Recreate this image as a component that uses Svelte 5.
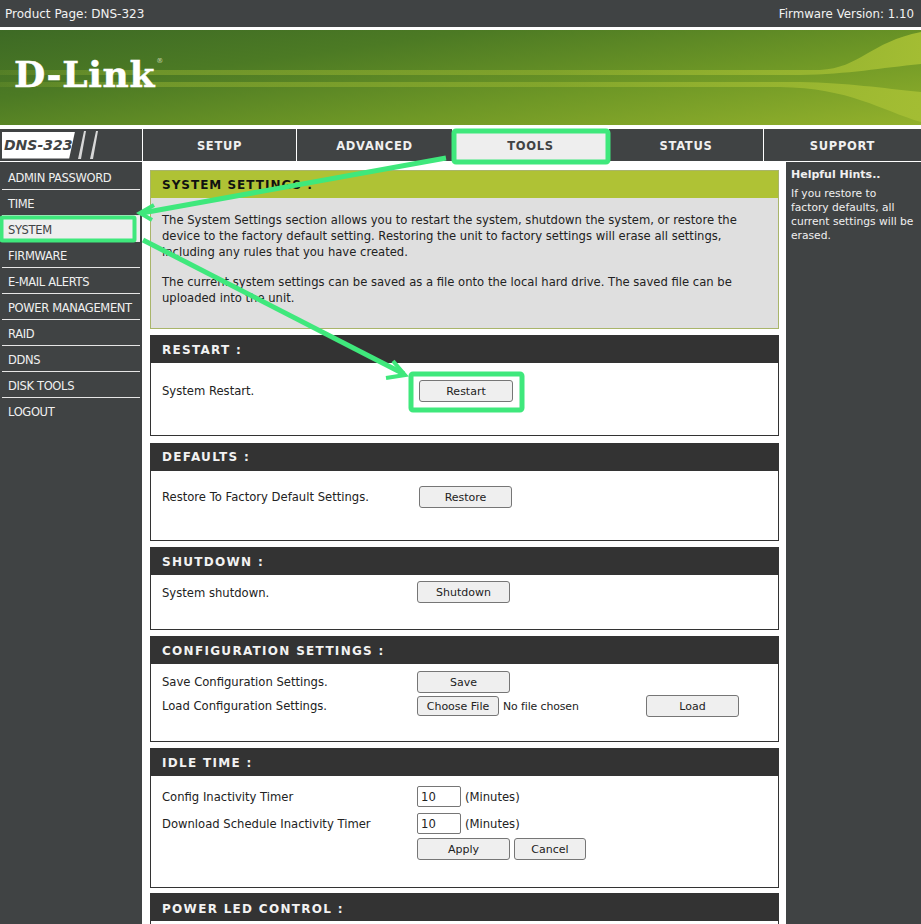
<script>
  const tabs = ['SETUP', 'ADVANCED', 'TOOLS', 'STATUS', 'SUPPORT'];
  const menu = ['ADMIN PASSWORD', 'TIME', 'SYSTEM', 'FIRMWARE', 'E-MAIL ALERTS', 'POWER MANAGEMENT', 'RAID', 'DDNS', 'DISK TOOLS', 'LOGOUT'];
</script>

<div class="page">
  <header class="topbar"><span>Product Page: DNS-323</span><span class="fw">Firmware Version: 1.10</span></header>

  <div class="banner">
    <svg class="streaks" viewBox="0 0 921 95" preserveAspectRatio="none" aria-hidden="true">
      <defs>
        <linearGradient id="st" x1="0" x2="1" y1="0" y2="0">
          <stop offset="0" stop-color="#a3bd33" stop-opacity="0.15"/>
          <stop offset="0.15" stop-color="#a3bd33" stop-opacity="0.4"/>
          <stop offset="0.6" stop-color="#a3bd33" stop-opacity="0.45"/>
          <stop offset="0.88" stop-color="#a3bd33" stop-opacity="0.75"/>
          <stop offset="1" stop-color="#a3bd33" stop-opacity="1"/>
        </linearGradient>
      </defs>
      <path d="M0 40L820 40C860 38 870 12 921 2V34C880 38 850 44 800 45L0 45Z" fill="url(#st)"/>
      <path d="M0 52L800 52C850 53 880 58 921 62V92C880 80 850 58 780 57L0 57Z" fill="url(#st)"/>
    </svg>
    <div class="logo">D-Link<sup>®</sup></div>
  </div>

  <div class="navrow">
    <div class="brand">
      <span class="brandbox">DNS-323</span>
      <svg class="slashes" width="26" height="28" viewBox="0 0 26 28" aria-hidden="true">
        <path d="M2 28L5 28L10 0L8 0ZM14 28L17 28L22 0L20 0Z" fill="#d8d8d8"/>
      </svg>
    </div>
    {#each tabs as t}
      <div class="tab" class:active={t === 'TOOLS'}>{t}</div>
    {/each}
  </div>

  <div class="columns">
    <nav class="menu">
      {#each menu as m}
        <div class="item" class:current={m === 'SYSTEM'}><span>{m}</span></div>
      {/each}
    </nav>

    <main class="main">
      <section class="box intro">
        <h2>SYSTEM SETTINGS :</h2>
        <div class="introbody">
          <p>The System Settings section allows you to restart the system, shutdown the system, or restore the device to the factory default setting. Restoring the unit to factory settings will erase all settings, including any rules that you have created.</p>
          <p>The current system settings can be saved as a file onto the local hard drive. The saved file can be uploaded into the unit.</p>
        </div>
      </section>

      <section class="box restart">
        <h2>RESTART :</h2>
        <div class="row r1"><label>System Restart.</label><button class="btn wide">Restart</button></div>
      </section>

      <section class="box defaults">
        <h2>DEFAULTS :</h2>
        <div class="row r2"><label>Restore To Factory Default Settings.</label><button class="btn">Restore</button></div>
      </section>

      <section class="box shutdown">
        <h2>SHUTDOWN :</h2>
        <div class="row r3"><label>System shutdown.</label><button class="btn">Shutdown</button></div>
      </section>

      <section class="box config">
        <h2>CONFIGURATION SETTINGS :</h2>
        <div class="row r4"><label>Save Configuration Settings.</label><button class="btn">Save</button></div>
        <div class="row r5">
          <label>Load Configuration Settings.</label>
          <button class="btn choose">Choose File</button><span class="nofile">No file chosen</span>
          <button class="btn load">Load</button>
        </div>
      </section>

      <section class="box idle">
        <h2>IDLE TIME :</h2>
        <div class="row r6"><label>Config Inactivity Timer</label><span class="fake">10</span><span class="unit">(Minutes)</span></div>
        <div class="row r7"><label>Download Schedule Inactivity Timer</label><span class="fake">10</span><span class="unit">(Minutes)</span></div>
        <div class="row r8"><label></label><button class="btn">Apply</button><button class="btn cancel">Cancel</button></div>
      </section>

      <section class="box power">
        <h2>POWER LED CONTROL :</h2>
      </section>
    </main>

    <aside class="hints">
      <strong>Helpful Hints..</strong>
      <p>If you restore to factory defaults, all current settings will be erased.</p>
    </aside>
  </div>

  <svg class="notes" width="921" height="924" viewBox="0 0 921 924" aria-hidden="true">
    <g fill="none" stroke="#3fe87c">
      <rect x="454" y="131" width="154" height="31" rx="2" stroke-width="5"/>
      <rect x="1.5" y="217.500" width="133" height="23" rx="1" stroke-width="4"/>
      <rect x="411" y="374" width="111" height="36" rx="2" stroke-width="5"/>
      <path d="M446 158L142 213" stroke-width="5"/>
      <path d="M154 205L140 213L152 220" stroke-width="4"/>
      <path d="M143 240L404 374" stroke-width="5"/>
      <path d="M386 378L405 375L393 361" stroke-width="4"/>
    </g>
  </svg>
</div>

<style>
  :global(body) { margin: 0; background: #fff; }
  .page {
    position: relative;
    width: 921px;
    height: 924px;
    overflow: hidden;
    font-family: "DejaVu Sans", Tahoma, sans-serif;
    font-size: 11.6px;
    color: #222;
    background: #fff;
  }
  .topbar {
    height: 27px;
    box-sizing: border-box;
    padding: 1px 7px 0 5px;
    background: #404344;
    color: #f2f2f2;
    font-size: 12px;
    display: flex;
    align-items: center;
    justify-content: space-between;
    margin-bottom: 3px;
  }
  .fw { font-size: 11.8px; }
  .banner {
    position: relative;
    height: 95px;
    margin-bottom: 4px;
    background: linear-gradient(172deg, #3d6a25 0%, #4c7a24 30%, #6f9826 65%, #93b12c 100%);
    overflow: hidden;
  }
  .streaks { position: absolute; inset: 0; width: 100%; height: 100%; }
  .logo {
    position: absolute;
    left: 14px;
    top: 22px;
    font-family: "DejaVu Serif", serif;
    font-weight: 700;
    font-size: 36px;
    line-height: 44px;
    letter-spacing: 0.7px;
    color: #fff;
    -webkit-text-stroke: 0.5px #fff;
  }
  .logo sup { font-size: 7px; vertical-align: 24px; line-height: 0; letter-spacing: 0; color: #cfd8b0; font-weight: 400; -webkit-text-stroke: 0; margin-left: 1px; }
  .navrow { display: flex; height: 32px; background: #404344; border-bottom: 1px solid #fff; }
  .brand { width: 143px; display: flex; align-items: center; flex: none; padding-left: 2px; box-sizing: border-box; border-right: 1px solid #fff; }
  .brandbox {
    width: 73px;
    height: 27px;
    flex: none;
    box-sizing: border-box;
    padding-left: 2px;
    background: #fff;
    color: #404344;
    font-style: italic;
    font-weight: 700;
    font-size: 14px;
    line-height: 27px;
    clip-path: polygon(0 0, 100% 0, 92% 100%, 0 100%);
    white-space: nowrap;
  }
  .slashes { margin-left: 1px; flex: none; }
  .tab {
    width: 156px;
    flex: none;
    box-sizing: border-box;
    border-right: 1px solid #fff;
    text-align: center;
    line-height: 34px;
    font-size: 11.5px;
    font-weight: 700;
    letter-spacing: 0.7px;
    color: #f0f0f0;
  }
  .tab:nth-child(2) { width: 154px; }
  .tab:nth-child(5) { width: 155px; }
  .tab:last-child { width: 157px; border-right: 0; }
  .tab.active { background: #eeeeee; color: #404344; }
  .columns { display: flex; align-items: stretch; height: 763px; }
  .menu { width: 142px; flex: none; background: #404344; padding-top: 2px; box-sizing: border-box; margin-right: 1px; }
  .item {
    height: 25px;
    margin: 0 2px;
    border-bottom: 1px solid #e6e6e6;
    color: #f0f0f0;
    font-size: 11.5px;
    line-height: 28px;
    padding-left: 6px;
    white-space: nowrap;
    letter-spacing: -0.35px;
  }
  .item:last-child { border-bottom: 0; }
  .item.current { background: #eeeeee; color: #404344; }
  .main { width: 643px; flex: none; box-sizing: border-box; padding: 8px 6px 0 7px; }
  .hints {
    flex: none;
    width: 135px;
    background: #404344;
    color: #f0f0f0;
    padding: 6px 0 6px 5px;
    box-sizing: border-box;
    font-size: 11px;
    line-height: 14px;
  }
  .hints strong { display: block; margin-bottom: 5px; }
  .hints p { margin: 0; font-size: 10.7px; max-width: 124px; }
  .box { box-sizing: border-box; border: 1px solid #333; margin-bottom: 6px; background: #fff; width: 629px; }
  h2 {
    margin: 0;
    height: 27px;
    background: #333;
    color: #f2f2f2;
    font-size: 12px;
    font-weight: 700;
    line-height: 29px;
    padding-left: 11px;
    letter-spacing: 1.3px;
    overflow: hidden;
  }
  .intro { height: 159px; border-color: #a9b56a; background: #dfdfdf; }
  .intro h2 { background: #afc235; color: #111; letter-spacing: 1px; }
  .introbody { padding: 13.6px 11px 0; line-height: 16px; }
  .introbody p { margin: 0 0 14px; }
  .restart { height: 101px; margin-bottom: 7px; }
  .defaults { height: 98px; }
  .defaults h2 { line-height: 27px; }
  .shutdown { height: 83px; }
  .config { height: 106px; }
  .idle { height: 140px; margin-bottom: 5px; }
  .power { height: 40px; }
  .power h2 { line-height: 31px; }
  .row { display: flex; align-items: center; padding-left: 11px; }
  .row label { width: 255px; flex: none; }
  .r1 { margin-top: 17px; }
  .r1 label { width: 257px; }
  .r2 { margin-top: 15px; }
  .r2 label { width: 257px; }
  .r3 { margin-top: 6px; }
  .r3 label { padding-top: 1px; }
  .r4 { margin-top: 7px; }
  .r5 { margin-top: 2px; }
  .r6 { margin-top: 10px; }
  .r7 { margin-top: 6px; }
  .r8 { margin-top: 4px; }
  .btn {
    width: 93px;
    height: 22px;
    padding: 0;
    box-sizing: border-box;
    background: #efefef;
    border: 1px solid #767676;
    border-radius: 3px;
    font-family: inherit;
    font-size: 11px;
    color: #222;
  }
  .btn.wide { width: 94px; }
  .choose { width: 82px; height: 20px; }
  .nofile { margin-left: 4px; width: 143px; font-size: 10.9px; letter-spacing: -0.1px; }
  .cancel { width: 72px; margin-left: 4px; }
  .fake {
    width: 44px;
    height: 21px;
    box-sizing: border-box;
    border: 1px solid #767676;
    border-radius: 2px;
    padding-left: 3px;
    line-height: 21px;
    background: #fff;
  }
  .unit { margin-left: 4px; }
  .notes { position: absolute; left: 0; top: 0; pointer-events: none; }
</style>
